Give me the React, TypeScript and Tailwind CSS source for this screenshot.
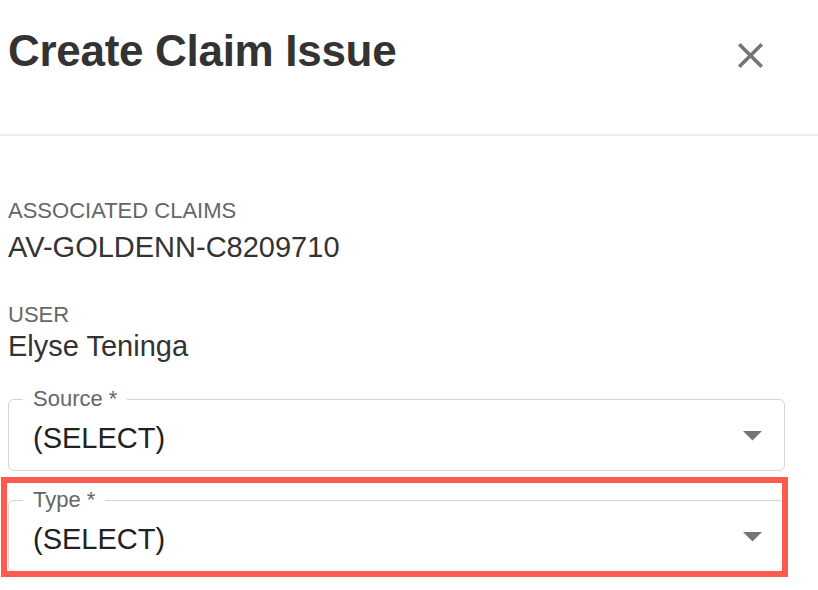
import React from 'react';

function CloseIcon() {
  return (
    <svg width={43} height={43} viewBox="0 0 24 24" fill="#757575">
      <path d="M19 6.41 17.59 5 12 10.59 6.41 5 5 6.41 10.59 12 5 17.59 6.41 19 12 13.41 17.59 19 19 17.59 13.41 12z" />
    </svg>
  );
}

function Caret() {
  return (
    <svg width={19} height={10} viewBox="0 0 19 10" fill="#757575" className="mb-[5px] shrink-0">
      <path d="M0 0h19L9.5 9.5z" />
    </svg>
  );
}

function SelectField({ label }: { label: string }) {
  return (
    <fieldset className="border border-[#d3d3d3] rounded-[6px] m-0 p-0 min-w-0">
      <legend className="ml-[14px] px-[10px] text-[22px] leading-none text-[#666]">{label}</legend>
      <div className="flex items-center justify-between pl-[24px] pr-[22px] pt-[14px] pb-[17px]">
        <span className="text-[29px] leading-none text-[#212121]">(SELECT)</span>
        <Caret />
      </div>
    </fieldset>
  );
}

export default function App() {
  return (
    <div className="w-[818px] h-[590px] bg-white overflow-hidden font-['Liberation_Sans']">
      <header className="h-[136px] border-b-2 border-[#ebebeb] flex items-start justify-between pl-2 pr-[46px]">
        <h1 className="mt-[29px] text-[44px] leading-none font-bold text-[#333] tracking-[-0.3px]">
          Create Claim Issue
        </h1>
        <button type="button" className="mt-[34px] cursor-pointer">
          <CloseIcon />
        </button>
      </header>

      <div className="pl-2 pr-[33px]">
        <div className="mt-[64px] text-[22px] leading-none text-[#666]">ASSOCIATED CLAIMS</div>
        <div className="mt-[11px] text-[29px] leading-none text-[#333]">AV-GOLDENN-C8209710</div>

        <div className="mt-[42px] text-[22px] leading-none text-[#666]">USER</div>
        <div className="mt-[6px] text-[29px] leading-none text-[#333]">Elyse Teninga</div>

        <div className="mt-[27px]">
          <SelectField label="Source *" />
        </div>

        <div className="relative mt-[18px]">
          <SelectField label="Type *" />
          <div className="absolute -top-[12px] -left-[7px] -right-[3px] -bottom-[5px] border-[6px] border-[#ff5a4f] pointer-events-none" />
        </div>
      </div>
    </div>
  );
}
